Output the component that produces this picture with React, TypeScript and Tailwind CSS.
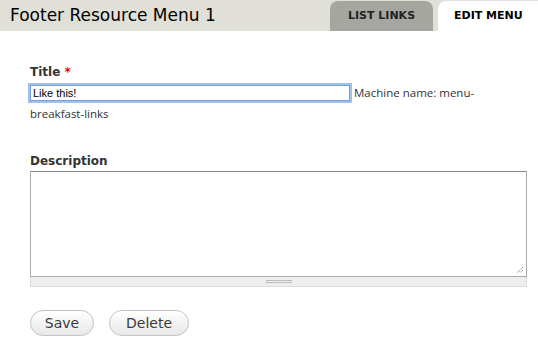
import React from "react";

const font = { fontFamily: '"DejaVu Sans", "Lucida Grande", sans-serif' };
const small = { fontFamily: '"Open Sans", "Lucida Grande", sans-serif' };

export default function App() {
  return (
    <div className="w-[538px] h-[346px] bg-white overflow-hidden text-[#333]" style={font}>
      {/* header */}
      <div className="h-[31px] bg-[#e0e0d8] flex items-end justify-between">
        <h1 className="pl-[10px] pb-[7px] text-[17px] leading-none text-black">Footer Resource Menu 1</h1>
        <div className="flex items-end gap-[5px] h-[30px]">
          <div className="h-[30px] w-[103px] bg-[#a6a6a0] rounded-t-[8px] flex items-center justify-center text-[11px] font-bold text-[#222]">
            LIST LINKS
          </div>
          <div className="h-[30px] w-[100px] bg-white rounded-tl-[8px] flex items-center pl-[16px] text-[11px] font-bold text-black">
            EDIT MENU
          </div>
        </div>
      </div>

      <div className="pl-[30px] pt-[34px]">
        {/* title */}
        <div className="text-[12px] font-bold leading-[14px]">
          Title <span className="text-[#e00]">*</span>
        </div>
        <div className="mt-[3px] flex flex-wrap items-center text-[11.5px] leading-[22px]" style={small}>
          <input
            readOnly
            value="Like this!"
            className="w-[320px] h-[16px] border border-[#7a9cd3] outline outline-2 outline-[#9ec1ef] px-[2px] text-[11px] text-black bg-white mr-[4px]"
            style={{ fontFamily: '"Liberation Sans", Arial, sans-serif' }}
          />
          <span>Machine name: menu-</span>
        </div>
        <div className="text-[11.5px] leading-[20px]" style={small}>breakfast-links</div>

        {/* description */}
        <div className="mt-[30px] text-[12px] font-bold leading-[14px]">Description</div>
        <div className="mt-[3px] w-[497px]">
          <div className="relative h-[106px] border border-[#aaa] border-t-[#888] bg-white">
            <svg className="absolute right-[2px] bottom-[2px]" width="8" height="8" viewBox="0 0 8 8">
              <path d="M7 1L1 7M7 4L4 7" stroke="#666" strokeWidth="1" strokeDasharray="1 1" />
            </svg>
          </div>
          <div className="h-[10px] bg-[#eee] border border-t-0 border-[#ddd] flex flex-col items-center justify-center gap-[1px]">
            <div className="w-[26px] h-px bg-[#bbb]" />
            <div className="w-[26px] h-px bg-[#bbb]" />
          </div>
        </div>

        {/* buttons */}
        <div className="mt-[23px] flex gap-[15px]">
          <button className="w-[64px] h-[26px] rounded-full border border-[#c4c4c4] bg-gradient-to-b from-white to-[#e8e8e8] text-[14px] text-[#3a3a3a]">
            Save
          </button>
          <button className="w-[80px] h-[26px] rounded-full border border-[#c4c4c4] bg-gradient-to-b from-white to-[#e8e8e8] text-[14px] text-[#3a3a3a]">
            Delete
          </button>
        </div>
      </div>
    </div>
  );
}
